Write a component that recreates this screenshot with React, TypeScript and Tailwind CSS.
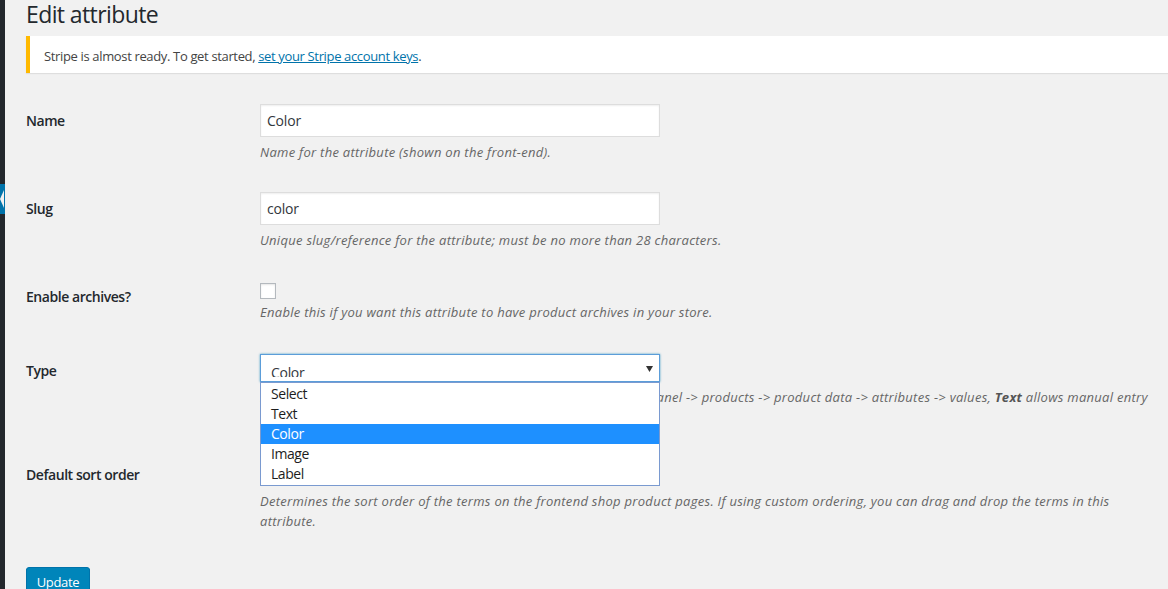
import React from "react"

const font = "font-['Open_Sans','Noto_Sans',sans-serif]"

const Desc: React.FC<{ lines: React.ReactNode[]; className?: string }> = ({ lines, className }) => (
  <div className={`text-[13px] leading-[20px] italic tracking-[0.28px] text-[#666] whitespace-nowrap ${className ?? ""}`}>
    {lines.map((l, i) => (
      <div key={i}>{l}</div>
    ))}
  </div>
)

const Label: React.FC<{ children: React.ReactNode }> = ({ children }) => (
  <div className="w-[234px] shrink-0 pt-[23px] text-[14px] leading-[18px] font-semibold tracking-[-0.45px] text-[#23282d]">
    {children}
  </div>
)

const TextInput: React.FC<{ value: string }> = ({ value }) => (
  <div className="w-[400px] h-[33px] bg-white border border-[#ddd] shadow-[inset_0_1px_2px_rgba(0,0,0,0.07)] flex items-center pl-[6px] text-[14px] tracking-[-0.2px] text-[#32373c]">
    {value}
  </div>
)

const options = ["Select", "Text", "Color", "Image", "Label"]

export default function App() {
  return (
    <div className={`flex w-[1168px] h-[589px] overflow-hidden bg-[#f1f1f1] ${font}`}>
      {/* admin menu edge */}
      <div className="relative w-[5px] shrink-0 bg-[#23282d]">
        <div className="absolute left-0 top-[184px] w-[5px] h-[30px] bg-[#0073aa]" />
        <div className="absolute left-0 top-[190px] w-0 h-0 border-y-[9px] border-y-transparent border-r-[4px] border-r-[#f1f1f1]" />
      </div>

      <div className="flex-1 pl-[21px] min-w-0">
        <h1 className="text-[23px] leading-[29px] font-normal tracking-[-0.6px] text-[#23282d]">Edit attribute</h1>

        <div className="mt-[7px] h-[37px] bg-white border-l-4 border-[#ffb900] shadow-[0_1px_1px_rgba(0,0,0,0.08)] flex items-center pt-[4px] pl-[14px] text-[13px] tracking-[-0.35px] text-[#444]">
          <span>
            Stripe is almost ready. To get started,{" "}
            <a href="#" className="text-[#0073aa] underline">
              set your Stripe account keys
            </a>
            .
          </span>
        </div>

        <div className="mt-[16px]">
          {/* Name */}
          <div className="flex">
            <Label>Name</Label>
            <div className="pt-[15px] pb-[15px]">
              <TextInput value="Color" />
              <Desc className="mt-[5px]" lines={["Name for the attribute (shown on the front-end)."]} />
            </div>
          </div>

          {/* Slug */}
          <div className="flex">
            <Label>Slug</Label>
            <div className="pt-[15px] pb-[15px]">
              <TextInput value="color" />
              <Desc
                className="mt-[5px]"
                lines={["Unique slug/reference for the attribute; must be no more than 28 characters."]}
              />
            </div>
          </div>

          {/* Enable archives */}
          <div className="flex">
            <Label>Enable archives?</Label>
            <div className="pt-[18px] pb-[17px]">
              <div className="w-[16px] h-[16px] bg-white border border-[#b4b9be] shadow-[inset_0_1px_2px_rgba(0,0,0,0.1)]" />
              <Desc
                className="mt-[3px]"
                lines={["Enable this if you want this attribute to have product archives in your store."]}
              />
            </div>
          </div>

          {/* Type */}
          <div className="flex">
            <Label>Type</Label>
            <div className="relative pt-[15px] pb-[16px]">
              <div className="relative w-[400px] h-[28px] bg-white border border-[#5b9dd9] shadow-[0_0_2px_rgba(30,140,190,0.8)]">
                <div className="h-[22px] overflow-hidden pl-[10px] pt-[9px] text-[14px] leading-[18px] tracking-[-0.3px] text-[#32373c]">
                  Color
                </div>
                <svg className="absolute right-[6px] top-[11px]" width="7" height="6" viewBox="0 0 7 6">
                  <path d="M0 0h7L3.5 6z" fill="#333" />
                </svg>
              </div>
              <Desc
                className="mt-[5px]"
                lines={[
                  <>
                    Determines how you select attributes for products. Under admin panel -&gt; products -&gt; product
                    data -&gt; attributes -&gt; values, <b className="text-[#555]">Text</b> allows manual entry
                  </>,
                  <>
                    whereas <b className="text-[#555]">select</b> allows pre-configured terms in a drop-down list.
                  </>,
                ]}
              />

              {/* open dropdown list */}
              <div className="absolute left-0 top-[43px] z-10 w-[400px] bg-white border border-[#7a9ad0] py-[1px] text-[14px] tracking-[-0.45px] text-[#1d1d1d]">
                {options.map((o) => (
                  <div
                    key={o}
                    className={`h-[20px] leading-[20px] pl-[10px] ${o === "Color" ? "bg-[#1e90ff] text-white" : ""}`}
                  >
                    {o}
                  </div>
                ))}
              </div>
            </div>
          </div>

          {/* Default sort order */}
          <div className="flex">
            <Label>Default sort order</Label>
            <div className="pt-[15px] pb-[15px]">
              <div className="w-[400px] h-[28px] bg-white border border-[#ddd]" />
              <Desc
                className="mt-[5px]"
                lines={[
                  "Determines the sort order of the terms on the frontend shop product pages. If using custom ordering, you can drag and drop the terms in this",
                  "attribute.",
                ]}
              />
            </div>
          </div>
        </div>

        <div className="mt-[21px]">
          <button className="w-[64px] h-[30px] rounded-[3px] bg-[#0085ba] border border-[#0073aa] shadow-[0_1px_0_#006799] text-white text-[13px] tracking-[-0.3px] leading-[26px]">
            Update
          </button>
        </div>
      </div>
    </div>
  )
}
